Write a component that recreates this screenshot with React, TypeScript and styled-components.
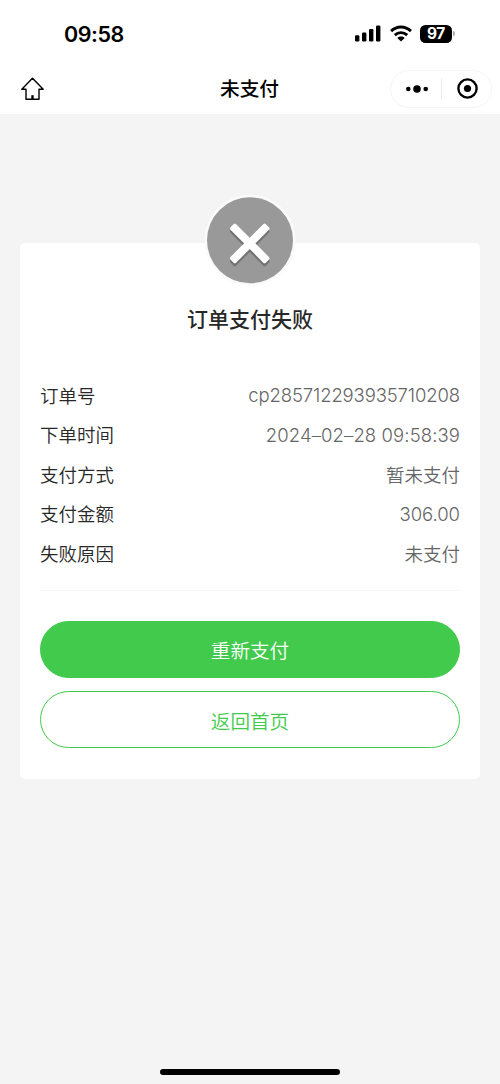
import React from "react";
import styled, { createGlobalStyle } from "styled-components";

const GlobalStyle = createGlobalStyle`
  * { box-sizing: border-box; }
  body {
    margin: 0;
    background: #f4f4f4;
    font-family: Inter, "Noto Sans CJK SC", sans-serif;
  }
`;

const Screen = styled.div`
  width: 500px;
  height: 1084px;
  display: flex;
  flex-direction: column;
  background: #f4f4f4;
  overflow: hidden;
`;

const StatusBar = styled.header`
  height: 63px;
  flex: none;
  display: flex;
  align-items: center;
  justify-content: space-between;
  padding: 4px 44px 0 64px;
  background: #fff;
`;

const Clock = styled.span`
  font-size: 21.5px;
  font-weight: 600;
  line-height: 28px;
  letter-spacing: -0.45px;
  color: #000;
`;

const StatusIcons = styled.div`
  display: flex;
  align-items: center;
`;

const BatteryBody = styled.span`
  width: 32px;
  height: 18px;
  margin-left: 8px;
  border-radius: 5.5px;
  background: #000;
  color: #fff;
  font-size: 15.5px;
  font-weight: 700;
  line-height: 18px;
  text-align: center;
  letter-spacing: -0.3px;
`;

const BatteryTip = styled.span`
  width: 2px;
  height: 5px;
  margin: 0 1px;
  border-radius: 0 2px 2px 0;
  background: #aaa;
`;

const NavBar = styled.nav`
  height: 51px;
  flex: none;
  display: grid;
  grid-template-columns: 1fr auto 1fr;
  align-items: center;
  padding: 0 8px 0 20px;
  background: #fff;
`;

const NavTitle = styled.h1`
  margin: 1px 0 0 -13px;
  font-size: 19.7px;
  font-weight: 500;
  line-height: 28px;
  color: #000;
`;

const Capsule = styled.div`
  justify-self: end;
  width: 102px;
  height: 38px;
  border: 1px solid #f5f5f5;
  border-radius: 19px;
  display: flex;
  align-items: center;
`;

const CapsuleButton = styled.span`
  flex: 1;
  display: flex;
  justify-content: center;
  padding-left: 2px;
`;

const CapsuleDivider = styled.span`
  width: 1px;
  height: 21px;
  background: #ececec;
`;

const Card = styled.main`
  margin: 129px 20px 0;
  height: 536px;
  padding: 0 20px;
  border-radius: 5px;
  background: #fff;
  display: flex;
  flex-direction: column;
  align-items: stretch;
`;

const StatusBadge = styled.div`
  align-self: center;
  height: 94px;
  margin-top: -50px;
`;

const ResultTitle = styled.h2`
  margin: 18px 0 0;
  text-align: center;
  font-size: 21px;
  font-weight: 500;
  line-height: 30px;
  color: #282828;
`;

const Details = styled.dl`
  margin: 40.4px 0 0;
  padding-bottom: 16.6px;
  border-bottom: 1px solid #f5f5f5;
`;

const DetailRow = styled.div`
  height: 39.6px;
  display: flex;
  align-items: center;
  justify-content: space-between;
  font-size: 18.5px;
  font-weight: 350;
  line-height: 28px;
`;

const Label = styled.dt`
  padding-top: 1px;
  color: #282828;
`;

const Value = styled.dd<{ $tracking?: number }>`
  margin: 0;
  padding-top: ${(p) => (p.$tracking === undefined ? 1 : 0)}px;
  color: #666;
  letter-spacing: ${(p) => p.$tracking ?? 0}px;
`;

const Actions = styled.div`
  margin-top: 30px;
  display: flex;
  flex-direction: column;
  gap: 13px;
`;

const ActionButton = styled.button<{ $outline?: boolean }>`
  height: 57px;
  padding: ${(p) => (p.$outline ? 5 : 3)}px 0 0;
  border: 1px solid #42ca4d;
  border-radius: 29px;
  background: ${(p) => (p.$outline ? "#fff" : "#42ca4d")};
  color: ${(p) => (p.$outline ? "#42ca4d" : "#fff")};
  font-family: inherit;
  font-size: 19.6px;
  font-weight: 350;
  line-height: 28px;
`;

const HomeIndicator = styled.div`
  width: 180px;
  height: 6px;
  flex: none;
  margin: auto auto 9px;
  border-radius: 3px;
  background: #000;
`;

const details = [
  { label: "订单号", value: "cp285712293935710208", tracking: -0.13 },
  { label: "下单时间", value: "2024–02–28 09:58:39", tracking: 0.1 },
  { label: "支付方式", value: "暂未支付" },
  { label: "支付金额", value: "306.00", tracking: -0.05 },
  { label: "失败原因", value: "未支付" },
];

const SignalIcon = () => (
  <svg width="26" height="17" viewBox="0 0 26 17">
    <rect x="0" y="10.2" width="4.4" height="6.3" rx="1.2" />
    <rect x="7" y="7.5" width="4.4" height="9" rx="1.2" />
    <rect x="14" y="4" width="4.4" height="12.5" rx="1.2" />
    <rect x="21" y="0.5" width="4.4" height="16" rx="1.2" />
  </svg>
);

const WifiSvg = styled.svg`
  margin-left: 9px;
`;

const WifiIcon = () => (
  <WifiSvg width="22" height="17" viewBox="0 0 22 17">
    <g fill="none" stroke="#000" strokeWidth="2.9">
      <path d="M1.1 6.1C6.8 .6 15.2 .6 20.9 6.1" />
      <path d="M4.8 10.1C8.4 6.8 13.6 6.8 17.2 10.1" />
    </g>
    <path d="M11 16.6 7.3 12.9c2.1-1.9 5.3-1.9 7.4 0Z" />
  </WifiSvg>
);

const HomeIcon = () => (
  <svg width="25" height="24" viewBox="0 0 25 24" fill="none" stroke="#000" strokeWidth="1.4" strokeLinejoin="round">
    <path d="M12.5 1.3 1.8 12.3H6V22.3H19V12.3H23.2Z" />
    <path d="M12.5 18.2V22" strokeWidth="2.4" />
  </svg>
);

const FailedIcon = () => (
  <svg width="94" height="94" viewBox="0 0 94 94">
    <circle cx="47" cy="47.3" r="45.5" fill="#fafafa" />
    <circle cx="47" cy="47.3" r="43" fill="#999" />
    <g fill="#737373">
      <rect x="21.7" y="49.4" width="50" height="8" rx="1.8" transform="rotate(45 46.7 53.4)" />
      <rect x="21.7" y="49.4" width="50" height="8" rx="1.8" transform="rotate(-45 46.7 53.4)" />
    </g>
    <g fill="#fff">
      <rect x="21.7" y="46.4" width="50" height="8" rx="1.8" transform="rotate(45 46.7 50.4)" />
      <rect x="21.7" y="46.4" width="50" height="8" rx="1.8" transform="rotate(-45 46.7 50.4)" />
    </g>
  </svg>
);

export default function App() {
  return (
    <Screen>
      <GlobalStyle />
      <StatusBar>
        <Clock>09:58</Clock>
        <StatusIcons>
          <SignalIcon />
          <WifiIcon />
          <BatteryBody>97</BatteryBody>
          <BatteryTip />
        </StatusIcons>
      </StatusBar>
      <NavBar>
        <HomeIcon />
        <NavTitle>未支付</NavTitle>
        <Capsule>
          <CapsuleButton>
            <svg width="22" height="8" viewBox="0 0 22 8">
              <circle cx="2.3" cy="4" r="2.3" />
              <circle cx="11" cy="4" r="3.8" />
              <circle cx="19.7" cy="4" r="2.3" />
            </svg>
          </CapsuleButton>
          <CapsuleDivider />
          <CapsuleButton>
            <svg width="21" height="21" viewBox="0 0 21 21">
              <circle cx="10.5" cy="10.5" r="9.1" fill="none" stroke="#000" strokeWidth="2.4" />
              <circle cx="10.5" cy="10.5" r="3.6" />
            </svg>
          </CapsuleButton>
        </Capsule>
      </NavBar>
      <Card>
        <StatusBadge>
          <FailedIcon />
        </StatusBadge>
        <ResultTitle>订单支付失败</ResultTitle>
        <Details>
          {details.map((d) => (
            <DetailRow key={d.label}>
              <Label>{d.label}</Label>
              <Value $tracking={d.tracking}>{d.value}</Value>
            </DetailRow>
          ))}
        </Details>
        <Actions>
          <ActionButton>重新支付</ActionButton>
          <ActionButton $outline>返回首页</ActionButton>
        </Actions>
      </Card>
      <HomeIndicator />
    </Screen>
  );
}
